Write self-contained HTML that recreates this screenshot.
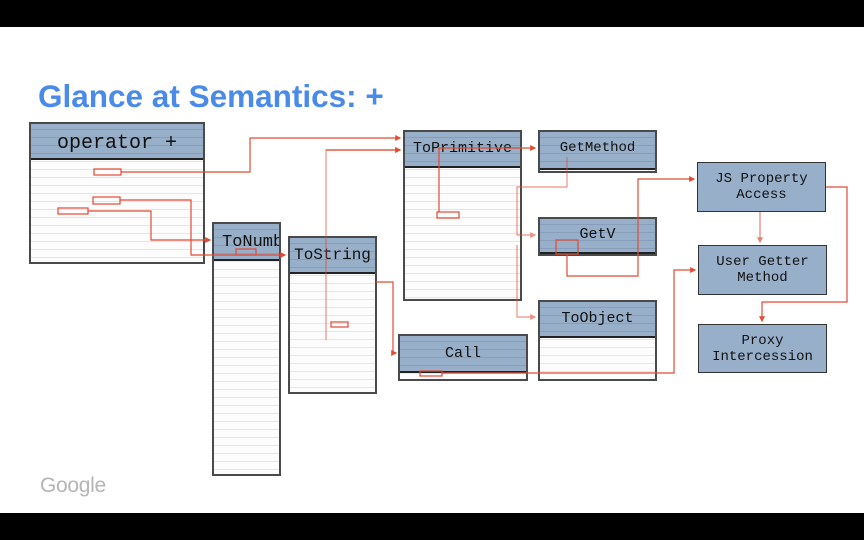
<!DOCTYPE html>
<html><head><meta charset="utf-8">
<style>
*{margin:0;padding:0;box-sizing:border-box}
body{width:864px;height:540px;background:#fff;position:relative;overflow:hidden;font-family:"Liberation Sans",sans-serif}
.bar{position:absolute;left:0;width:864px;background:#000}
h1{position:absolute;left:38px;top:78px;font-size:31.5px;font-weight:bold;color:#4a8ae8;white-space:nowrap}
.doc{position:absolute;border:2.5px solid #4a4a4a;background:#fcfcfc repeating-linear-gradient(to bottom,transparent 0,transparent 5px,#e6e6e6 5px,#e6e6e6 6px,transparent 6px,transparent 8px);background-clip:padding-box}
.doc .hd{position:absolute;left:0;top:0;right:0;background:#98afca;border-bottom:2px solid #222;font-family:"Liberation Mono",monospace;color:#111;text-align:center;white-space:nowrap;overflow:hidden}
.doc .hd i{position:absolute;left:0;right:0;top:0;bottom:0;background:repeating-linear-gradient(to bottom,transparent 0,transparent 5px,rgba(60,80,120,.18) 5px,rgba(60,80,120,.18) 6px,transparent 6px,transparent 8px)}
.doc .hd span{position:relative}
.js{position:absolute;background:#98afca;border:1.5px solid #333;font-family:"Liberation Mono",monospace;font-size:14px;line-height:16px;text-align:center;color:#111;display:flex;align-items:center;justify-content:center}
svg{position:absolute;left:0;top:0}
</style></head><body>
<div class="bar" style="top:0;height:27px"></div>
<div class="bar" style="top:513px;height:27px"></div>
<h1>Glance at Semantics: +</h1>

<div class="doc" style="left:29px;top:122px;width:176px;height:142px"><div class="hd" style="height:36px;font-size:20px;line-height:40px"><i></i><span>operator +</span></div></div>
<div class="doc" style="left:212px;top:222px;width:69px;height:254px"><div class="hd" style="height:37px;font-size:17px;line-height:38px;text-align:left;padding-left:8px"><i></i><span>ToNumbe</span></div></div>
<div class="doc" style="left:288px;top:236px;width:89px;height:158px"><div class="hd" style="height:36px;font-size:16px;line-height:34px"><i></i><span>ToString</span></div></div>
<div class="doc" style="left:403px;top:130px;width:119px;height:171px"><div class="hd" style="height:36px;font-size:15px;line-height:34px"><i></i><span>ToPrimitive</span></div></div>
<div class="doc" style="left:538px;top:130px;width:119px;height:43px"><div class="hd" style="height:38px;font-size:14px;line-height:32px"><i></i><span>GetMethod</span></div></div>
<div class="doc" style="left:538px;top:217px;width:119px;height:39px"><div class="hd" style="height:35px;font-size:15px;line-height:32px"><i></i><span>GetV</span></div></div>
<div class="doc" style="left:538px;top:300px;width:119px;height:81px"><div class="hd" style="height:36px;font-size:15px;line-height:34px"><i></i><span>ToObject</span></div></div>
<div class="doc" style="left:398px;top:334px;width:130px;height:47px"><div class="hd" style="height:37px;font-size:15px;line-height:36px"><i></i><span>Call</span></div></div>

<div class="js" style="left:697px;top:162px;width:129px;height:50px">JS Property<br>Access</div>
<div class="js" style="left:698px;top:245px;width:129px;height:50px">User Getter<br>Method</div>
<div class="js" style="left:698px;top:324px;width:129px;height:49px">Proxy<br>Intercession</div>

<svg width="864" height="540">
<defs><marker id="a" markerWidth="5" markerHeight="5" refX="4" refY="2.5" orient="auto"><path d="M0,0L5,2.5L0,5z" fill="#e24a33"/></marker></defs>
<g fill="none" stroke="#e24a33" stroke-width="1.2">
<rect x="94" y="169" width="27" height="6"/>
<rect x="93" y="197" width="27" height="7"/>
<rect x="58" y="208" width="30" height="6"/>
<path d="M121,172H250V138H400" marker-end="url(#a)"/>
<path d="M120,200H191V255H285" marker-end="url(#a)"/>
<path d="M88,211H151V240H210" marker-end="url(#a)"/>
<path d="M326,340V150H400" marker-end="url(#a)" opacity=".6"/>
<path d="M326,150H400" marker-end="url(#a)"/>
<path d="M438,148H535" marker-end="url(#a)"/>
<path d="M439,148V212"/>
<rect x="437" y="212" width="22" height="6"/>
<path d="M567,157V187H517V235H535" marker-end="url(#a)" opacity=".6"/>
<path d="M517,245V317H535" marker-end="url(#a)" opacity=".6"/>
<rect x="556" y="240" width="22" height="14"/>
<path d="M567,254V276H638V179H694" marker-end="url(#a)"/>
<path d="M760,212V242" marker-end="url(#a)" opacity=".7"/>
<path d="M826,187H847V302H762V321" marker-end="url(#a)"/>
<rect x="420" y="371" width="22" height="5"/>
<path d="M442,373H674V270H695" marker-end="url(#a)"/>
<rect x="331" y="322" width="17" height="5"/>
<path d="M376,282H393V353H396" marker-end="url(#a)"/>
<rect x="236" y="249" width="20" height="6"/>
</g>
</svg>
<div style="position:absolute;left:40px;top:474px;font-size:21px;color:#b5b5b5;letter-spacing:-0.3px">Google</div>
</body></html>
